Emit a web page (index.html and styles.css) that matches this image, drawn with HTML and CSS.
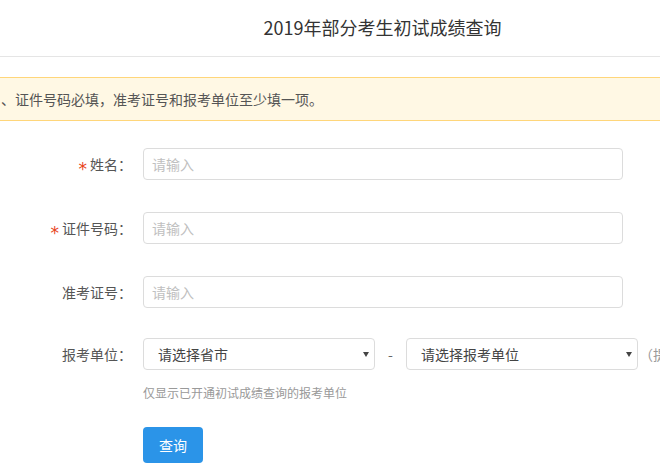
FILE: index.html
```html
<!DOCTYPE html>
<html lang="zh-CN">
<head>
<meta charset="utf-8">
<title>2019年部分考生初试成绩查询</title>
<link rel="stylesheet" href="styles.css">
</head>
<body>
<div class="page">
  <header class="header">
    <h1 class="title">2019年部分考生初试成绩查询</h1>
  </header>
  <div class="notice">
    <p class="notice-text">姓名、证件号码必填<span class="mid">，</span>准考证号和报考单位至少填一项。</p>
  </div>
  <form class="form">
    <div class="row">
      <label class="label"><span class="star">*</span>姓名<span class="mid">：</span></label>
      <div class="input"><span class="ph">请输入</span></div>
    </div>
    <div class="row">
      <label class="label"><span class="star">*</span>证件号码<span class="mid">：</span></label>
      <div class="input"><span class="ph">请输入</span></div>
    </div>
    <div class="row row-short">
      <label class="label">准考证号<span class="mid">：</span></label>
      <div class="input"><span class="ph">请输入</span></div>
    </div>
    <div class="row row-select">
      <label class="label">报考单位<span class="mid">：</span></label>
      <div class="select"><span>请选择省市</span><svg class="arrow" width="6" height="5" viewBox="0 0 6 5"><path d="M0 0H6L3 5Z" fill="#444"/></svg></div>
      <span class="dash">-</span>
      <div class="select"><span>请选择报考单位</span><svg class="arrow" width="6" height="5" viewBox="0 0 6 5"><path d="M0 0H6L3 5Z" fill="#444"/></svg></div>
      <span class="extra">（提示）</span>
    </div>
    <p class="hint">仅显示已开通初试成绩查询的报考单位</p>
    <button type="button" class="btn">查询</button>
  </form>
</div>
</body>
</html>
```
FILE: styles.css
```css
html, body {
  margin: 0;
  padding: 0;
  background: #fff;
  overflow: hidden;
}
body {
  font-family: "Noto Sans CJK SC", "Microsoft YaHei", sans-serif;
  font-size: 14px;
  color: #555;
}
.page {
  width: 765px;
}
.header {
  height: 56px;
  border-bottom: 1px solid #e5e5e5;
  display: flex;
  align-items: center;
  justify-content: center;
}
.title {
  margin: 0 0 2px;
  font-size: 18px;
  font-weight: normal;
  color: #333;
  line-height: 24px;
}
.notice {
  margin: 20px 0 0 -42px;
  width: 800px;
  height: 42px;
  background: #fff8e4;
  border-top: 1px solid #ffd67a;
  border-bottom: 1px solid #ffd67a;
  display: flex;
  align-items: center;
}
.notice-text {
  margin: 0 0 0 15px;
  font-size: 14px;
  color: #555;
  line-height: 20px;
}
.mid {
  font-family: "Noto Sans CJK TC", sans-serif;
}
.form {
  margin: 27px 0 0;
}
.row {
  display: flex;
  align-items: center;
  height: 32px;
  margin-bottom: 32px;
}
.row-short {
  margin-bottom: 30px;
}
.row-select {
  margin-bottom: 0;
}
.label {
  width: 132px;
  margin-right: 11px;
  text-align: right;
  color: #555;
  line-height: 20px;
  white-space: nowrap;
}
.star {
  color: #e8431a;
  margin-right: 3px;
  font-family: "DejaVu Sans", sans-serif;
  font-size: 17px;
  line-height: 10px;
  vertical-align: -5px;
}
.input {
  box-sizing: border-box;
  width: 480px;
  height: 32px;
  border: 1px solid #dcdcdc;
  border-radius: 4px;
  padding-left: 8px;
  display: flex;
  align-items: center;
}
.ph {
  color: #c0c0c0;
}
.select {
  box-sizing: border-box;
  width: 232px;
  height: 32px;
  border: 1px solid #dcdcdc;
  border-radius: 4px;
  padding: 0 5px 0 14px;
  display: flex;
  align-items: center;
  justify-content: space-between;
  color: #444;
  flex-shrink: 0;
}
.arrow {
  display: block;
}
.dash {
  width: 31px;
  text-align: center;
  color: #666;
  flex-shrink: 0;
}
.extra {
  margin-left: 1px;
  color: #999;
  white-space: nowrap;
}
.hint {
  margin: 14px 0 0 143px;
  font-size: 12px;
  line-height: 18px;
  color: #999;
}
.btn {
  display: block;
  margin: 25px 0 0 143px;
  width: 60px;
  height: 36px;
  border: none;
  border-radius: 4px;
  background: #2b94e8;
  color: #fff;
  font-family: inherit;
  font-size: 14px;
  padding: 0;
  cursor: pointer;
}
```
